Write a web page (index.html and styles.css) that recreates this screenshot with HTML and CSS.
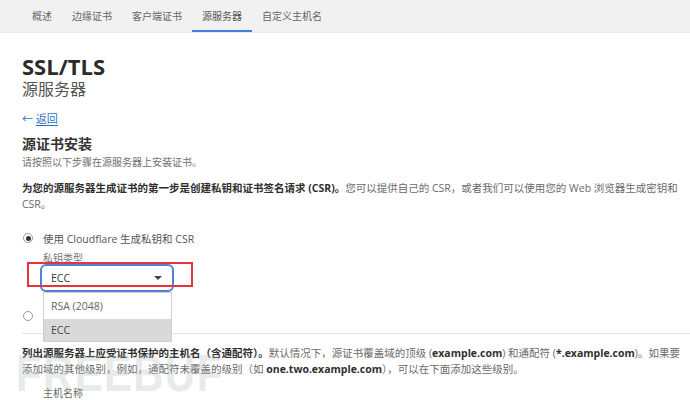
FILE: index.html
```html
<!DOCTYPE html>
<html lang="zh-CN">
<head>
<meta charset="utf-8">
<title>SSL/TLS 源服务器</title>
<link rel="stylesheet" href="styles.css">
</head>
<body>
<nav class="tabs">
  <a class="tab">概述</a>
  <a class="tab">边缘证书</a>
  <a class="tab">客户端证书</a>
  <a class="tab active">源服务器</a>
  <a class="tab">自定义主机名</a>
</nav>
<main class="page">
  <h1 class="title">SSL/TLS</h1>
  <div class="subtitle">源服务器</div>
  <a class="back"><span class="arrow">←</span> <span class="back-text">返回</span></a>
  <h2 class="section">源证书安装</h2>
  <p class="hint">请按照以下步骤在源服务器上安装证书。</p>
  <p class="para"><b>为您的源服务器生成证书的第一步是创建私钥和证书签名请求 (CSR)。</b>您可以提供自己的 CSR，或者我们可以使用您的 Web 浏览器生成密钥和 CSR。</p>

  <div class="options">
    <div class="radio-row">
      <span class="radio checked"></span>
      <span class="radio-label">使用 Cloudflare 生成私钥和 CSR</span>
    </div>
    <div class="field">
      <div class="field-label">私钥类型</div>
      <div class="select-wrap">
        <div class="select">
          <span>ECC</span>
          <span class="caret"></span>
        </div>
        <div class="annot"></div>
        <ul class="menu">
          <li class="menu-item">RSA (2048)</li>
          <li class="menu-item selected">ECC</li>
        </ul>
      </div>
    </div>
    <div class="radio-row second">
      <span class="radio"></span>
      <span class="radio-label">使用我的私钥和 CSR</span>
    </div>
  </div>

  <div class="divider"></div>

  <p class="para para2"><b>列出源服务器上应受证书保护的主机名（含通配符）。</b>默认情况下，源证书覆盖域的顶级 (<b>example.com</b>) 和通配符 (<b>*.example.com</b>)。如果要添加域的其他级别，例如，通配符未覆盖的级别（如 <b>one.two.example.com</b>），可以在下面添加这些级别。</p>
  <div class="host-label">主机名称</div>
  <div class="watermark">FREEBUF</div>
</main>
</body>
</html>
```

FILE: styles.css
```css
* { box-sizing: border-box; }
html, body { margin: 0; padding: 0; }
body {
  width: 690px;
  height: 400px;
  overflow: hidden;
  background: #fff;
  color: #333;
  font-family: "Open Sans", "Noto Sans CJK SC", sans-serif;
}
.tabs {
  display: flex;
  height: 33px;
  background: #f1f1f1;
  padding-left: 22px;
  border-bottom: 1px solid #ececec;
}
.tab {
  display: block;
  padding: 0 10px;
  font-size: 10px;
  line-height: 32px;
  color: #666;
}
.tab.active {
  box-shadow: inset 0 -2px 0 #3f7fde;
  color: #555;
}
.page {
  position: relative;
  padding: 0 8px 0 22px;
}
.title {
  margin: 20px 0 0;
  font-size: 22px;
  line-height: 26px;
  font-weight: 700;
  color: #2b2b2b;
}
.subtitle {
  font-size: 16px;
  line-height: 20px;
  color: #555;
}
.back {
  display: inline-block;
  margin-top: 12px;
  font-size: 11px;
  line-height: 16px;
  color: #2c71c9;
}
.back-text { text-decoration: underline; text-underline-offset: 2px; }
.arrow { font-size: 11px; }
.section {
  margin: 6px 0 0;
  font-size: 14px;
  line-height: 20px;
  font-weight: 700;
  color: #333;
}
.hint {
  margin: 0;
  font-size: 10px;
  line-height: 16px;
  color: #707070;
}
.para {
  margin: 10px 0 0;
  font-size: 10.5px;
  line-height: 16px;
  color: #6a6a6a;
}
.para b { color: #2f2f2f; }
.options { margin-top: 18px; }
.radio-row {
  display: flex;
  align-items: center;
  gap: 10px;
  padding-left: 1px;
  height: 16px;
}
.radio {
  width: 10px;
  height: 10px;
  border: 1px solid #9a9a9a;
  border-radius: 50%;
  background: #fff;
  display: flex;
  align-items: center;
  justify-content: center;
}
.radio.checked::after {
  content: "";
  width: 5px;
  height: 5px;
  border-radius: 50%;
  background: #333;
}
.radio-label {
  font-size: 10.5px;
  color: #555;
}
.field { padding-left: 21px; margin-top: 5px; }
.field-label {
  font-size: 10px;
  line-height: 14px;
  color: #777;
}
.select-wrap {
  position: relative;
  margin: -1px 0 0 -3px;
  width: 134px;
  height: 28px;
}
.select {
  display: flex;
  align-items: center;
  justify-content: space-between;
  height: 28px;
  padding: 0 10px 0 9px;
  border: 2px solid #4b83dc;
  border-radius: 6px;
  font-size: 10.5px;
  color: #333;
  background: #fff;
}
.caret {
  width: 0;
  height: 0;
  border-left: 4px solid transparent;
  border-right: 4px solid transparent;
  border-top: 4px solid #444;
}
.annot {
  position: absolute;
  left: -13px;
  top: -2px;
  width: 166px;
  height: 25px;
  border: 2px solid #e8333d;
  pointer-events: none;
}
.menu {
  position: absolute;
  left: 3px;
  top: 28px;
  width: 129px;
  margin: 0;
  padding: 0;
  list-style: none;
  background: #fff;
  border: 1px solid #cfcfcf;
  z-index: 2;
}
.menu-item {
  height: 22px;
  line-height: 22px;
  padding-left: 7px;
  font-size: 10.5px;
  color: #666;
}
.menu-item:first-child { height: 26px; line-height: 26px; }
.menu-item.selected { background: #d9d9d9; color: #444; }
.radio-row.second { margin-top: 16px; }
.divider {
  margin: 9px -8px 0 0;
  border-top: 1px solid #e2e2e2;
}
.para2 { margin-top: 12px; line-height: 15.5px; }
.host-label {
  margin-top: 9px;
  padding-left: 21px;
  font-size: 10px;
  line-height: 14px;
  color: #666;
}
.watermark {
  position: absolute;
  left: 16px;
  top: 290px;
  font-family: "Liberation Sans", sans-serif;
  font-size: 52px;
  line-height: 60px;
  font-weight: 700;
  letter-spacing: 2px;
  transform: scaleX(0.8);
  transform-origin: left top;
  color: rgba(170, 185, 178, 0.3);
  pointer-events: none;
}
```
